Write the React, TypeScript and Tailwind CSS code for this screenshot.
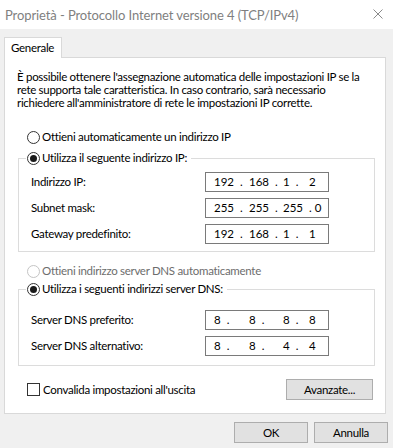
import type { ReactNode } from "react";

function Radio({
  checked = false,
  disabled = false,
  children,
}: {
  checked?: boolean;
  disabled?: boolean;
  children: ReactNode;
}) {
  return (
    <span className="flex items-center h-[16px]">
      <span
        className={`flex items-center justify-center w-[13px] h-[13px] rounded-full border bg-white ${
          disabled ? "border-[#c4c4c4]" : "border-[#333333]"
        }`}
      >
        {checked && <span className="w-[7px] h-[7px] rounded-full bg-[#1a1a1a]" />}
      </span>
      <span className={`ml-[2px] whitespace-nowrap ${disabled ? "text-[#6d6d6d]" : "text-black"}`}>
        {children}
      </span>
    </span>
  );
}

function IpBox({ octets }: { octets: string[] }) {
  const widths = ["min-w-[35px]", "min-w-[34px]", "min-w-[26px]", ""];
  return (
    <div className="flex items-center w-[124px] h-[20px] border border-[#7a7a7a] bg-white pl-[8px] tracking-normal">
      {octets.map((o, i) => (
        <span key={i} className={`flex ${widths[i]}`}>
          <span>{o}</span>
          {i < 3 && <span className="ml-[6px] mr-[3px]">.</span>}
        </span>
      ))}
    </div>
  );
}

function IpRow({ label, octets }: { label: string; octets: string[] }) {
  return (
    <div className="flex items-center h-[20px]">
      <span className="w-[174px] whitespace-nowrap">{label}</span>
      <IpBox octets={octets} />
    </div>
  );
}

function Button({ children, className = "" }: { children: ReactNode; className?: string }) {
  return (
    <button
      type="button"
      className={`h-[21px] bg-[#e1e1e1] border border-[#adadad] text-black flex items-center justify-center ${className}`}
    >
      {children}
    </button>
  );
}

export default function App() {
  return (
    <div className="w-[393px] h-[448px] bg-[#f0f0f0] text-[11.5px] tracking-[-0.3px] leading-[16px] text-black font-['Segoe_UI','Lato',sans-serif] overflow-hidden">
      {/* title bar */}
      <div className="h-[29px] bg-white flex items-center justify-between pl-[5px] pr-[10px]">
        <span className="text-[#7f7f7f] text-[13px] tracking-[-0.1px] whitespace-nowrap">
          Proprietà - Protocollo Internet versione 4 (TCP/IPv4)
        </span>
        <svg width="10" height="10" viewBox="0 0 10 10" className="mb-[2px]">
          <path d="M0.5 0.5 L9.5 9.5 M9.5 0.5 L0.5 9.5" stroke="#8a8a8a" strokeWidth="1" />
        </svg>
      </div>

      <div className="pt-[8px]">
        {/* tab */}
        <div className="relative z-10 -mb-px ml-[4px] w-[58px] h-[21px] border border-b-0 border-[#d9d9d9] bg-white pl-[6px] flex items-center">
          Generale
        </div>

        {/* panel */}
        <div className="ml-[4px] w-[382px] border border-[#d9d9d9] bg-white pl-[13px] pr-[10px] pt-[12px] pb-[13px]">
          <p className="-ml-px leading-[13px] whitespace-nowrap">
            È possibile ottenere l'assegnazione automatica delle impostazioni IP se la
            <br />
            rete supporta tale caratteristica. In caso contrario, sarà necessario
            <br />
            richiedere all'amministratore di rete le impostazioni IP corrette.
          </p>

          <div className="mt-[20px] ml-[9px]">
            <Radio>Ottieni automaticamente un indirizzo IP</Radio>
          </div>

          <fieldset className="mt-[5px] border border-[#dcdcdc] pl-[12px] pt-[6px] pb-[7px]">
            <legend className="-ml-[5px] pl-px pr-[4px]">
              <Radio checked>Utilizza il seguente indirizzo IP:</Radio>
            </legend>
            <div className="flex flex-col gap-[6px]">
              <IpRow label="Indirizzo IP:" octets={["192", "168", "1", "2"]} />
              <IpRow label="Subnet mask:" octets={["255", "255", "255", "0"]} />
              <IpRow label="Gateway predefinito:" octets={["192", "168", "1", "1"]} />
            </div>
          </fieldset>

          <div className="mt-[11px] ml-[9px]">
            <Radio disabled>Ottieni indirizzo server DNS automaticamente</Radio>
          </div>

          <fieldset className="mt-[2px] border border-[#dcdcdc] pl-[12px] pt-[13px] pb-[9px]">
            <legend className="-ml-[5px] pl-px pr-[4px]">
              <Radio checked>Utilizza i seguenti indirizzi server DNS:</Radio>
            </legend>
            <div className="flex flex-col gap-[6px]">
              <IpRow label="Server DNS preferito:" octets={["8", "8", "8", "8"]} />
              <IpRow label="Server DNS alternativo:" octets={["8", "8", "4", "4"]} />
            </div>
          </fieldset>

          <div className="mt-[13px] flex items-center justify-between pr-[2px]">
            <label className="ml-[9px] flex items-center">
              <span className="w-[13px] h-[13px] border border-[#333333] bg-white" />
              <span className="ml-[3px]">Convalida impostazioni all'uscita</span>
            </label>
            <Button className="w-[87px]">Avanzate...</Button>
          </div>
        </div>

        {/* dialog buttons */}
        <div className="mt-[8px] flex justify-end gap-[6px] pr-[5px]">
          <Button className="w-[74px]">OK</Button>
          <Button className="w-[74px]">Annulla</Button>
        </div>
      </div>
    </div>
  );
}
